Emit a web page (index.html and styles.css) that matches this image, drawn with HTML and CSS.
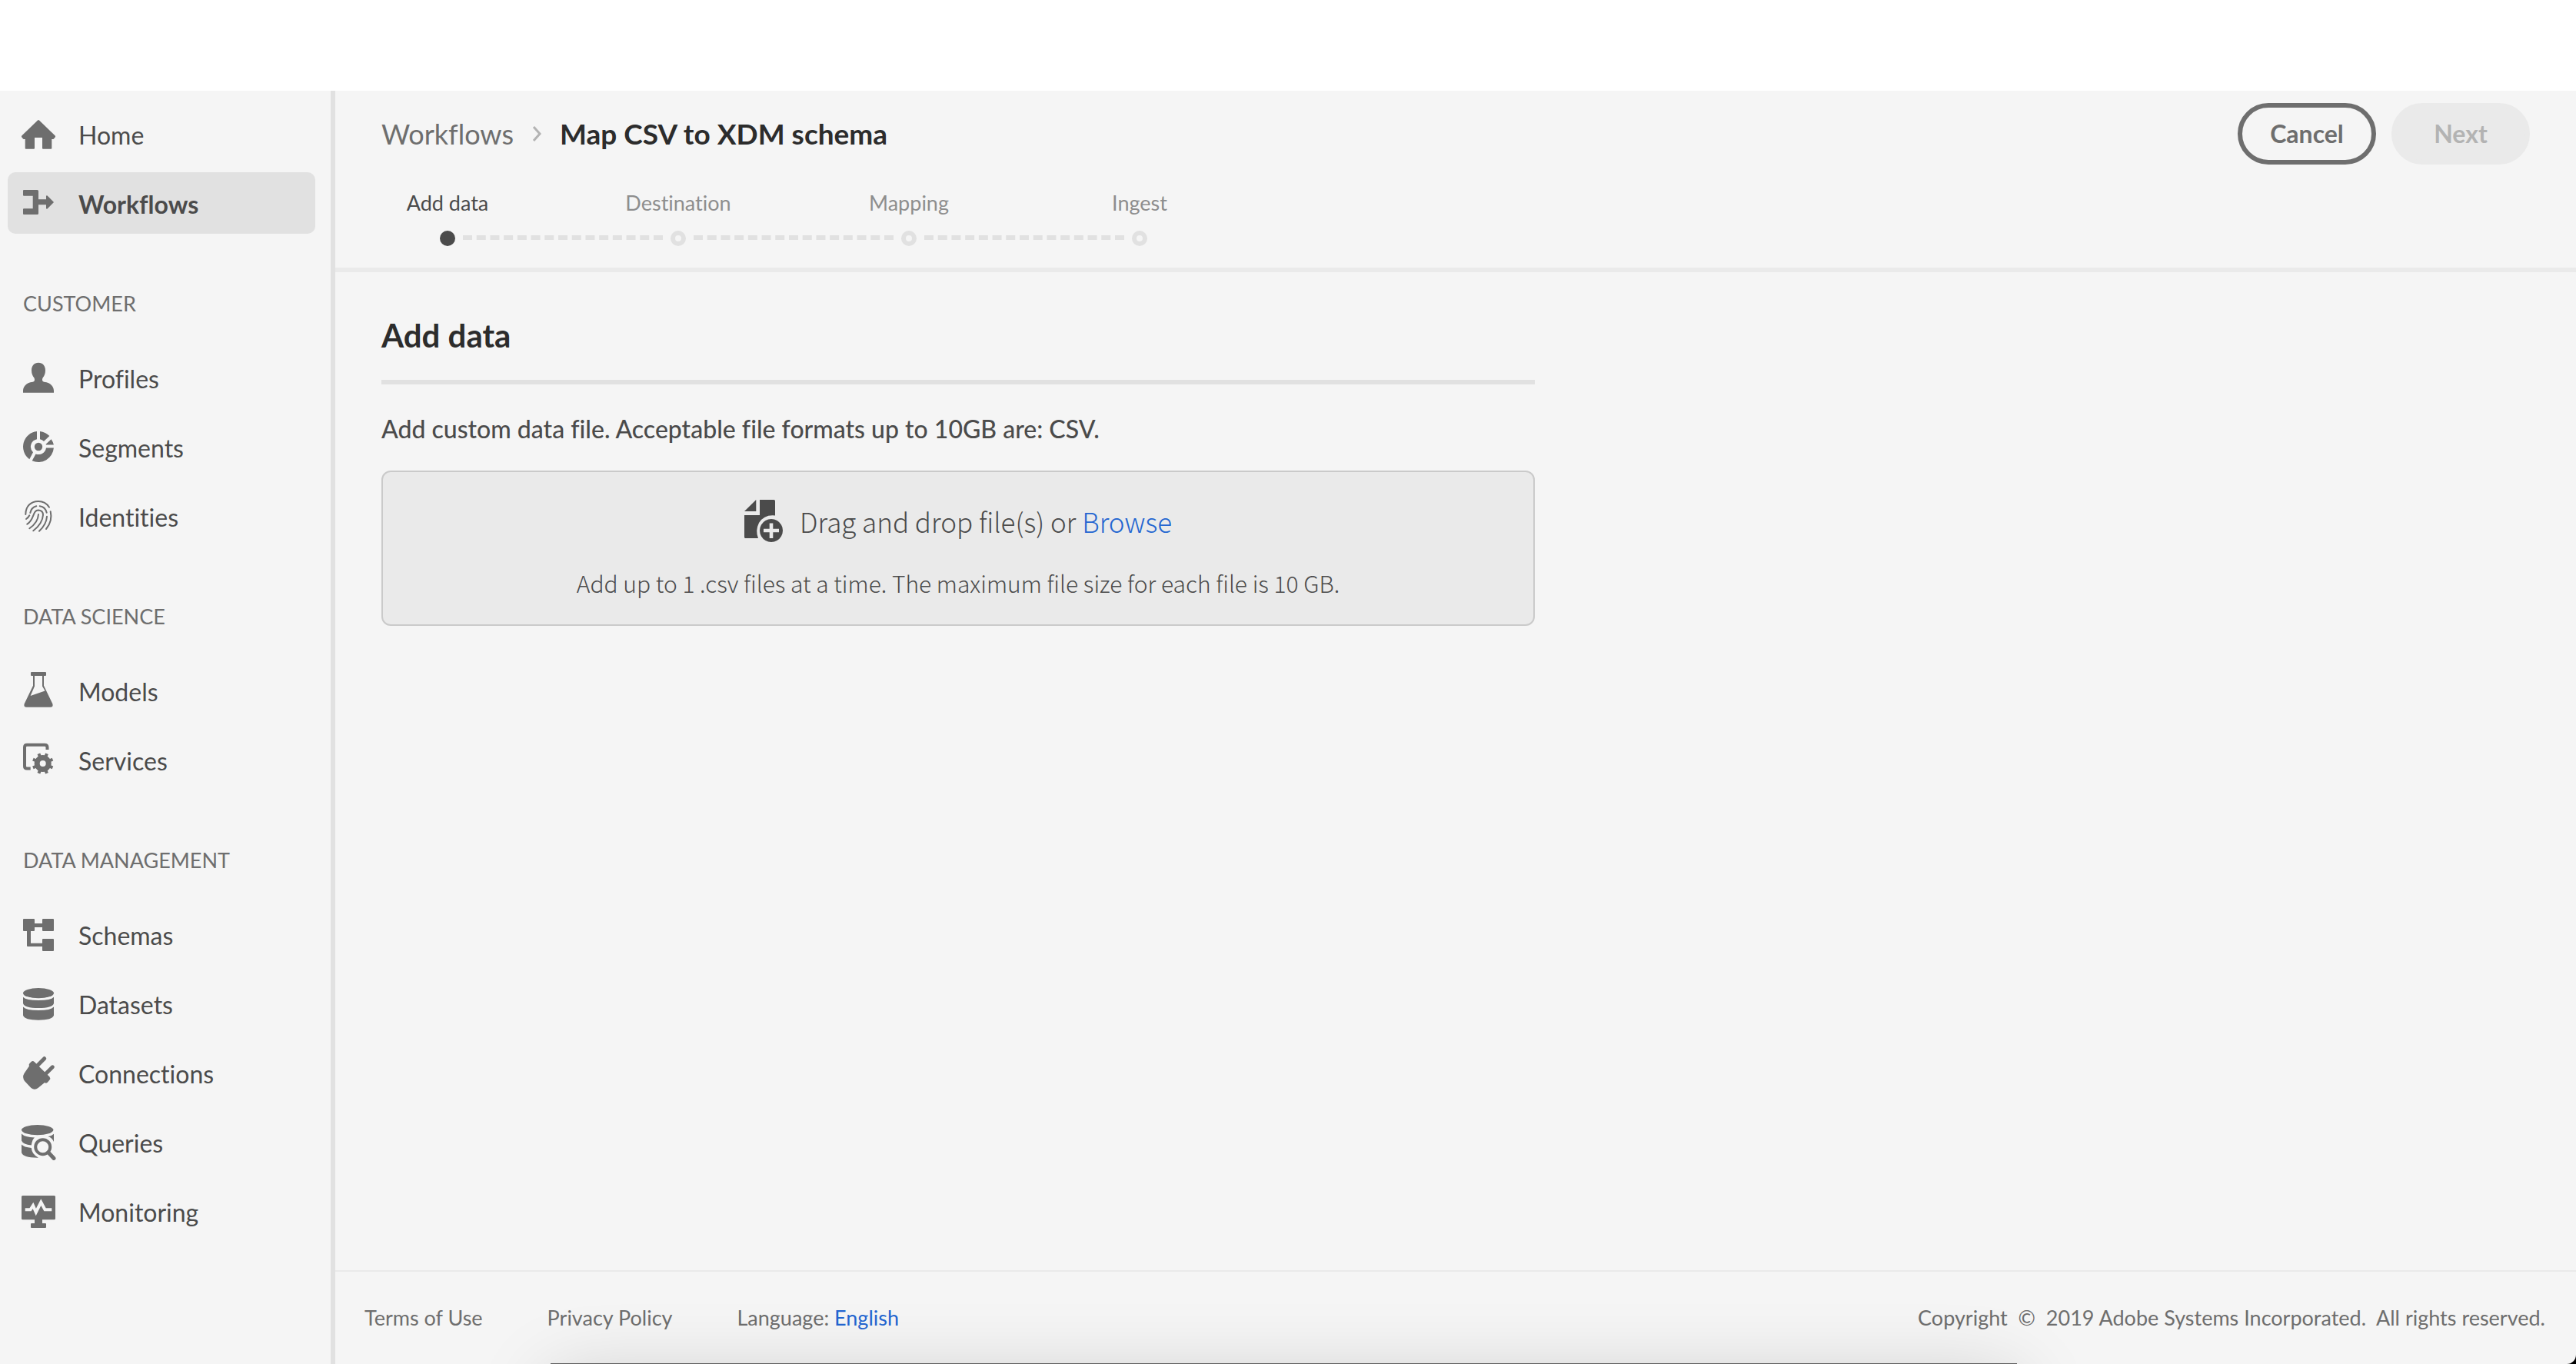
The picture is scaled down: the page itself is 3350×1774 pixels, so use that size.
FILE: index.html
```html
<!DOCTYPE html>
<html lang="en">
<head>
<meta charset="utf-8">
<title>Map CSV to XDM schema</title>
<link rel="stylesheet" href="styles.css">
</head>
<body>
<div class="app">
  <div class="topbar"></div>
  <div class="shell">
    <nav class="sidebar" aria-label="Main">
      <ul class="nav">
        <li><a class="nav-item" href="#home">
          <svg class="icon" viewBox="0 0 48 48"><path d="M23 6.4q1-.8 2 0L45.700 26.500q.8 1 0 2l-1.700 2q-.6.600-1.500.600H41.300V42.700q0 1-1 1H30q-1 0-1-1V29H19V42.700q0 1-1 1H7.700q-1 0-1-1V31.100H5.500q-.900 0-1.500-.6l-1.700-2q-.8-1 0-2z"/></svg>
          <span>Home</span></a></li>
        <li><a class="nav-item is-selected" href="#workflows" aria-current="page">
          <svg class="icon" viewBox="0 0 48 48"><path d="M5 7H22.500q1.500 0 1.500 1.500V19.300H34V15.200q.3-1.600 1.600-.6L44 23l-8.400 8.400q-1.300 1-1.600-.6V26.300H24V37.500q0 1.500-1.500 1.500H5q-1 0-1-1V32.300q0-1 1-1H16.700V14.700H5q-1 0-1-1V8q0-1 1-1z"/></svg>
          <span>Workflows</span></a></li>
      </ul>
      <h2 class="nav-heading">CUSTOMER</h2>
      <ul class="nav">
        <li><a class="nav-item" href="#profiles">
          <svg class="icon" viewBox="0 0 48 48"><path d="M24 4.700c5.600 0 9 4 9 10 0 4-1.500 7.500-3.300 9.600-1 1.300-1 4.400.4 5 1.500 1 3.900.8 5.900 1.500C41 32.500 44 37 44 41.500v2.200H4v-2.200C4 37 7 32.500 12 30.800c2-.7 4.400-.5 5.900-1.500 1.400-.6 1.400-3.700.4-5C16.500 22.200 15 18.700 15 14.700c0-6 3.400-10 9-10z"/></svg>
          <span>Profiles</span></a></li>
        <li><a class="nav-item" href="#segments">
          <svg class="icon" viewBox="0 0 48 48"><path d="M22 4.100V14.200A10 10 0 0 0 17 31.200L12.300 40.200A20 20 0 0 1 22 4.100zM26 4.100A20 20 0 0 1 38.300 10.100L31 16.900A10 10 0 0 0 26 14.200zM40.600 14.200A20 20 0 0 1 43.900 21.500H34L33.600 20.700zM34 25.500H43.900A20 20 0 0 1 15.700 42.200L20.500 33.400A10 10 0 0 0 34 25.500z"/><circle cx="24" cy="24" r="5.200"/></svg>
          <span>Segments</span></a></li>
        <li><a class="nav-item" href="#identities">
          <svg class="icon line thin" viewBox="0 0 48 48"><path d="M7.300 22C7.300 11.500 14 5 24 5q9 0 14 7.700M39.700 18.300C42 28 39 35 34 41M13.300 20q1.500-7 8-8.700M25.700 11.200q7.300 1 9 8.500M8 28q3-2 4.300-4.700M9.300 34.700C19 29 16 16.500 24 16.500q6 .5 6 6.200C29.500 31 24 38 17.300 43.300M24 22C23.500 31 18.500 36 12.300 40.300M35 24.700C34.500 33 30.500 38.500 25 43.700"/></svg>
          <span>Identities</span></a></li>
      </ul>
      <h2 class="nav-heading">DATA SCIENCE</h2>
      <ul class="nav">
        <li><a class="nav-item" href="#models">
          <svg class="icon" viewBox="0 0 48 48"><rect x="14" y="0" width="20" height="5" rx="1"/><path d="M17 4V17.800L5.600 41.500Q4.500 45.700 8.500 45.700H39.500Q43.500 45.700 42.400 41.500L31 17.800V4H29V18.500L32.500 24.500 13.600 31 19 18.500V4z"/></svg>
          <span>Models</span></a></li>
        <li><a class="nav-item" href="#services">
          <svg class="icon" viewBox="0 0 48 48"><path class="stroke" d="M13.700 35.500H9Q6 35.500 6 32.500V8Q6 4.700 9 4.700H32Q35.500 4.700 35.500 8V11"/><circle cx="29.700" cy="29" r="7.500" class="stroke gear"/><path class="stroke" d="M33.200 20.600l1.800-4.400M38.100 32.500l4.400 1.800M33.200 37.400l1.800 4.400M26.200 37.400l-1.800 4.400M21.300 32.500l-4.400 1.800M21.300 25.500l-4.400-1.800M26.200 20.600l-1.800-4.400M38.100 25.500l4.400-1.800"/></svg>
          <span>Services</span></a></li>
      </ul>
      <h2 class="nav-heading">DATA MANAGEMENT</h2>
      <ul class="nav">
        <li><a class="nav-item" href="#schemas">
          <svg class="icon" viewBox="0 0 48 48"><rect x="4" y="4" width="15" height="16" rx="1"/><rect x="29" y="4" width="15" height="16" rx="1"/><rect x="29" y="30" width="15" height="16" rx="1"/><path d="M18 10H30V15H18zM9 19H14V35.700H30V40H10q-1 0-1-1z"/></svg>
          <span>Schemas</span></a></li>
        <li><a class="nav-item" href="#datasets">
          <svg class="icon" viewBox="0 0 48 48"><ellipse cx="24" cy="10.700" rx="20" ry="6.600"/><path d="M4 15.700Q8 20 24 20T44 15.700V24Q42 30 24 30T4 24zM4 28.500Q8 33 24 33T44 28.500V39.500Q42 45.700 24 45.700T4 39.500z"/></svg>
          <span>Datasets</span></a></li>
        <li><a class="nav-item" href="#connections">
          <svg class="icon" viewBox="0 0 48 48"><path d="M12 15.500Q11 13.500 12.500 12l2-2Q16.500 8 18.700 10L38.500 29.500Q40 31.500 38.500 33.500l-2.500 3Q34.500 38.500 32 37l-8.500 7Q19 47.500 14.500 44L6 35Q2.500 30 5.500 25z"/><path class="stroke prong" d="M22 15.500L31.700 5.700M32.500 26.500L42.300 16.800"/></svg>
          <span>Connections</span></a></li>
        <li><a class="nav-item" href="#queries">
          <svg class="icon" viewBox="0 0 48 48"><ellipse cx="22.700" cy="8.600" rx="20.700" ry="6.600"/><path d="M2 13.500Q6 18 19 18.500Q16 20.500 14.800 28.500Q4 27.500 2 22.500zM2 27.500Q5 31 14.800 32Q15.500 40.500 24 44.700Q4 45 2 38zM44 13.700V24Q41.500 18.500 36.500 17.300Q41 16.500 44 13.700z"/><circle class="stroke" cx="29.700" cy="30.700" r="9.500"/><path class="stroke prong" d="M37 38L44 45.500"/></svg>
          <span>Queries</span></a></li>
        <li><a class="nav-item" href="#monitoring">
          <svg class="icon" viewBox="0 0 48 48"><rect x="2" y="4" width="44" height="31.300" rx="1.500"/><path d="M19 35H29V40H33q1 0 1 1V45q0 1-1 1H15q-1 0-1-1V41q0-1 1-1H19z"/><path class="pulse" d="M6.700 22.300H13.500L17 17 20.800 25.500 27.300 12.500 32.500 22.300H41.300"/></svg>
          <span>Monitoring</span></a></li>
      </ul>
    </nav>
    <div class="page">
      <header class="page-header">
        <div>
          <div class="breadcrumb">
            <a href="#workflows">Workflows</a>
            <svg class="chevron" viewBox="0 0 12 20"><path d="M2 1l8 9-8 9"/></svg>
            <h1>Map CSV to XDM schema</h1>
          </div>
          <ol class="steps">
            <li class="step is-current" aria-current="step">Add data</li>
            <li class="step">Destination</li>
            <li class="step">Mapping</li>
            <li class="step">Ingest</li>
          </ol>
        </div>
        <div class="actions">
          <button class="button" type="button">Cancel</button>
          <button class="button" type="button" disabled>Next</button>
        </div>
      </header>
      <main class="content">
        <h2 class="title">Add data</h2>
        <p class="intro">Add custom data file. Acceptable file formats up to 10GB are: CSV.</p>
        <div class="dropzone">
          <div class="drop-main">
            <svg class="file-icon" viewBox="0 0 52 56"><path d="M0 15L15.300 0V15zM20 0H38.500q1.500 0 1.500 1.500V20.500Q26 19 19 30Q14 40 18 50H1.500Q0 50 0 48.500V20H20z"/><path fill-rule="evenodd" d="M35 25a15 15 0 1 0 .01 0zM32.700 30.500h4.600v7.200H45v4.600H37.300v7.700H32.700V42.300H25V37.700h7.700z"/></svg>
            <p>Drag and drop file(s) or <a href="#browse">Browse</a></p>
          </div>
          <p class="drop-note">Add up to 1 .csv files at a time. The maximum file size for each file is 10 GB.</p>
        </div>
      </main>
      <footer class="footer">
        <a href="#terms">Terms of Use</a>
        <a href="#privacy">Privacy Policy</a>
        <span>Language: <a class="language" href="#language">English</a></span>
        <span class="copyright">Copyright &nbsp;© &nbsp;2019 Adobe Systems Incorporated. &nbsp;All rights reserved.</span>
      </footer>
    </div>
  </div>
  <div class="dock"></div>
</div>
</body>
</html>
```
FILE: styles.css
```css
*, *::before, *::after { box-sizing: border-box; }

html { background: #000; }

body {
  margin: 0;
  font-family: Lato, "Noto Sans", sans-serif;
  font-size: 32px;
  line-height: 40px;
  font-variant-ligatures: none;
  color: #4b4b4b;
}

h1, h2, p, ul, ol { margin: 0; padding: 0; }
ul, ol { list-style: none; }
a { color: #2466d1; text-decoration: none; }

.app {
  position: relative;
  display: flex;
  flex-direction: column;
  min-height: 100vh;
  overflow: hidden;
  background: #f5f5f5;
  border-bottom-right-radius: 12px;
}

.topbar { height: 118px; background: #fff; }

.shell { flex: 1; display: flex; }

/* Sidebar */
.sidebar {
  flex: none;
  width: 436px;
  padding: 16px 20px 16px 10px;
  border-right: 6px solid #e1e1e1;
}

.nav { display: grid; gap: 10px; }

.nav-item {
  display: flex;
  align-items: center;
  gap: 28px;
  height: 80px;
  padding: 0 16px;
  border-radius: 10px;
  color: #4b4b4b;
}

.nav-item.is-selected { background: #e1e1e1; font-weight: 700; }
.nav-item span { padding-top: 4px; }

.nav-heading {
  padding: 71px 0 36px 20px;
  font-size: 27px;
  font-weight: 400;
  color: #6e6e6e;
}

.icon { flex: none; width: 48px; height: 48px; fill: #6e6e6e; }
.icon.line, .icon .stroke { fill: none; stroke: #6e6e6e; stroke-width: 4; }
.icon.thin { stroke-width: 2; stroke-linecap: round; }
.icon .gear { stroke-width: 7; }
.icon .prong { stroke-width: 5; stroke-linecap: round; }
.icon .pulse { fill: none; stroke: #f5f5f5; stroke-width: 4; }

/* Header */
.page { flex: 1; min-width: 0; display: flex; flex-direction: column; }

.page-header {
  display: flex;
  justify-content: space-between;
  align-items: flex-start;
  padding: 16px 60px 28px;
  border-bottom: 6px solid #eaeaea;
}

.breadcrumb {
  display: flex;
  align-items: center;
  gap: 24px;
  height: 80px;
  font-size: 36px;
}

.breadcrumb a { color: #6e6e6e; }
.breadcrumb h1 { font-size: 37px; font-weight: 700; color: #2c2c2c; }
.chevron { width: 12px; height: 20px; fill: none; stroke: #b3b3b3; stroke-width: 3; }

.steps { display: flex; gap: 128px; margin-top: 32px; }

.step {
  position: relative;
  display: flex;
  flex-direction: column-reverse;
  align-items: center;
  gap: 18px;
  width: 172px;
  font-size: 27px;
  line-height: 36px;
  color: #8e8e8e;
}

.step.is-current { color: #4b4b4b; }

.step::before {
  content: "";
  width: 20px;
  height: 20px;
  border: 6px solid #e1e1e1;
  border-radius: 50%;
}

.step.is-current::before { border-color: #4b4b4b; background: #4b4b4b; }

.step:not(:last-child)::after {
  content: "";
  position: absolute;
  bottom: 8px;
  left: calc(50% + 20px);
  width: 260px;
  border-top: 6px dashed #e1e1e1;
}

.actions { display: flex; gap: 20px; }

.button {
  width: 180px;
  height: 80px;
  padding: 0;
  border: 6px solid #6e6e6e;
  border-radius: 40px;
  background: transparent;
  font: inherit;
  font-weight: 700;
  color: #6e6e6e;
}

.button:disabled { border-color: #eaeaea; background: #eaeaea; color: #b3b3b3; }

/* Content */
.content { flex: 1; max-width: 1620px; padding: 56px 60px; }

.title {
  padding-bottom: 32px;
  border-bottom: 6px solid #e1e1e1;
  font-size: 42px;
  line-height: 52px;
  color: #2c2c2c;
}

.intro { margin: 38px 0 34px; font-weight: 500; }

.dropzone {
  padding: 36px 20px 34px;
  border: 2px solid #cacaca;
  border-radius: 12px;
  background: #eaeaea;
  font-family: "Noto Sans CJK SC", "Noto Sans", sans-serif;
  font-weight: 300;
  text-align: center;
}

.drop-main {
  display: flex;
  justify-content: center;
  align-items: center;
  gap: 20px;
  font-size: 35px;
  line-height: 56px;
}

.file-icon { width: 52px; height: 56px; fill: #4b4b4b; }
.drop-note { margin-top: 32px; font-size: 30px; }

/* Footer */
.footer {
  display: flex;
  align-items: center;
  gap: 84px;
  height: 122px;
  padding: 0 40px 0 38px;
  border-top: 2px solid #eaeaea;
  font-size: 27px;
  color: #6e6e6e;
}

.footer a { color: inherit; }
.footer .language { color: #2466d1; }
.copyright { margin-left: auto; }

/* Edge of the dock window rising from below the viewport */
.dock {
  position: absolute;
  left: 716px;
  right: 727px;
  bottom: -99px;
  height: 100px;
  background: #5c5c5c;
  box-shadow: 0 20px 100px rgba(0, 0, 0, 0.18);
  pointer-events: none;
}
```
